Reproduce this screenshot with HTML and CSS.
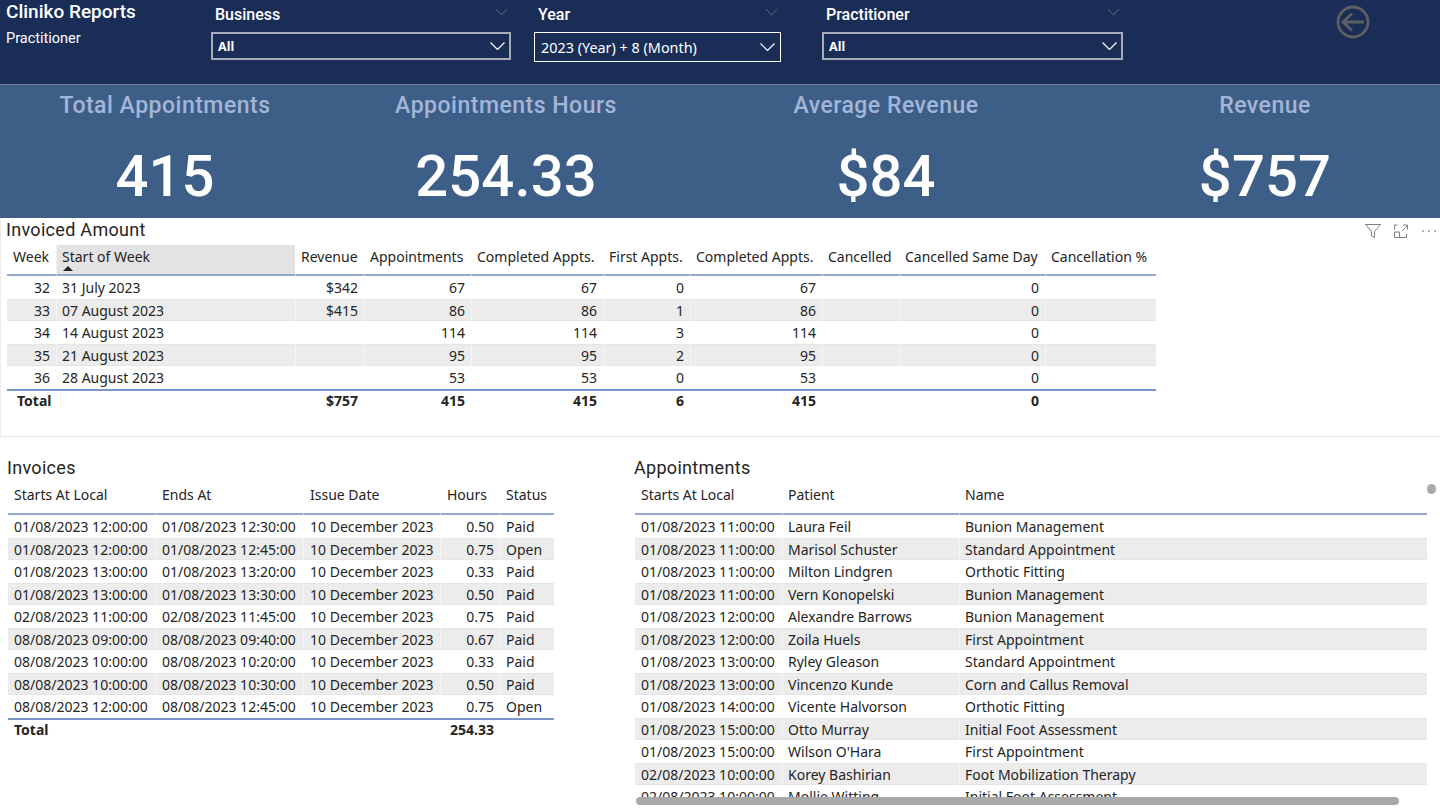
FILE: index.html
```html
<!DOCTYPE html>
<html lang="en">
<head>
    <meta charset="UTF-8">
    <title>Cliniko Reports - Practitioner</title>
    <link rel="stylesheet" href="styles.css">
</head>
<body>

    <header class="topbar">
        <div class="brand">
            <div class="brand-title">Cliniko Reports</div>
            <div class="brand-sub">Practitioner</div>
        </div>
        <div class="slicer slicer-business">
            <div class="slicer-head">
                <span>Business</span>
                <svg class="chev chev-dim" viewBox="0 0 14 8"><path d="M1 1l6 6 6-6"/></svg>
            </div>
            <div class="slicer-box">
                <b>All</b>
                <svg class="chev" viewBox="0 0 14 8"><path d="M0 0.5l7 7 7-7"/></svg>
            </div>
        </div>
        <div class="slicer slicer-year">
            <div class="slicer-head">
                <span>Year</span>
                <svg class="chev chev-dim" viewBox="0 0 14 8"><path d="M1 1l6 6 6-6"/></svg>
            </div>
            <div class="slicer-box slicer-box-tall">
                <span>2023 (Year) + 8 (Month)</span>
                <svg class="chev" viewBox="0 0 14 8"><path d="M0 0.5l7 7 7-7"/></svg>
            </div>
        </div>
        <div class="slicer slicer-prac">
            <div class="slicer-head">
                <span>Practitioner</span>
                <svg class="chev chev-dim" viewBox="0 0 14 8"><path d="M1 1l6 6 6-6"/></svg>
            </div>
            <div class="slicer-box">
                <b>All</b>
                <svg class="chev" viewBox="0 0 14 8"><path d="M0 0.5l7 7 7-7"/></svg>
            </div>
        </div>
        <svg class="back" viewBox="0 0 34 34">
            <circle cx="17" cy="17" r="15"/>
            <path d="M28 17H8M16 8.500l-9 8.500 9 8.500"/>
        </svg>
    </header>

    <section class="kpis">
        <div class="kpi"><div class="kpi-label">Total Appointments</div><div class="kpi-value">415</div></div>
        <div class="kpi"><div class="kpi-label">Appointments Hours</div><div class="kpi-value">254.33</div></div>
        <div class="kpi"><div class="kpi-label">Average Revenue</div><div class="kpi-value">$84</div></div>
        <div class="kpi"><div class="kpi-label">Revenue</div><div class="kpi-value">$757</div></div>
    </section>

    <section class="panel-weekly">
        <h3 class="visual-title">Invoiced Amount</h3>
        <div class="visual-tools">
            <svg viewBox="0 0 16 16"><path d="M0.500 1.500h15L9.500 8.500v6l-3-1.500V8.500z"/></svg>
            <svg viewBox="0 0 16 16"><path d="M1.500 6.500V2h3M1.500 9v5.500h12V11M1.500 9h5v5.500M9 8l5.500-5.500M10 2h4.500v4.500"/></svg>
            <svg viewBox="0 0 16 16"><path class="dots" d="M1 8h1.600M7.200 8h1.600M13.400 8h1.600"/></svg>
        </div>
        <table class="grid weekly">
            <colgroup>
                <col class="w-week"><col class="w-start"><col class="w-rev"><col class="w-appt"><col class="w-comp">
                <col class="w-first"><col class="w-comp"><col class="w-canc"><col class="w-same"><col class="w-pct">
            </colgroup>
            <thead>
                <tr>
                    <th>Week</th>
                    <th class="sorted">Start of Week<i class="sort-mark"></i></th>
                    <th>Revenue</th>
                    <th>Appointments</th>
                    <th>Completed Appts.</th>
                    <th>First Appts.</th>
                    <th>Completed Appts.</th>
                    <th>Cancelled</th>
                    <th>Cancelled Same Day</th>
                    <th>Cancellation %</th>
                </tr>
            </thead>
            <tbody>
                <tr><td class="num">32</td><td>31 July 2023</td><td class="num">$342</td><td class="num">67</td><td class="num">67</td><td class="num">0</td><td class="num">67</td><td></td><td class="num">0</td><td></td></tr>
                <tr><td class="num">33</td><td>07 August 2023</td><td class="num">$415</td><td class="num">86</td><td class="num">86</td><td class="num">1</td><td class="num">86</td><td></td><td class="num">0</td><td></td></tr>
                <tr><td class="num">34</td><td>14 August 2023</td><td></td><td class="num">114</td><td class="num">114</td><td class="num">3</td><td class="num">114</td><td></td><td class="num">0</td><td></td></tr>
                <tr><td class="num">35</td><td>21 August 2023</td><td></td><td class="num">95</td><td class="num">95</td><td class="num">2</td><td class="num">95</td><td></td><td class="num">0</td><td></td></tr>
                <tr><td class="num">36</td><td>28 August 2023</td><td></td><td class="num">53</td><td class="num">53</td><td class="num">0</td><td class="num">53</td><td></td><td class="num">0</td><td></td></tr>
            </tbody>
            <tfoot>
                <tr><td class="total-label">Total</td><td></td><td class="num">$757</td><td class="num">415</td><td class="num">415</td><td class="num">6</td><td class="num">415</td><td></td><td class="num">0</td><td></td></tr>
            </tfoot>
        </table>
    </section>

    <section class="lower">
        <div class="panel-invoices">
            <h3 class="visual-title">Invoices</h3>
            <table class="grid invoices">
                <colgroup>
                    <col class="w-stamp"><col class="w-stamp2"><col class="w-issue"><col class="w-hours"><col class="w-status">
                </colgroup>
                <thead>
                    <tr><th>Starts At Local</th><th>Ends At</th><th>Issue Date</th><th>Hours</th><th>Status</th></tr>
                </thead>
                <tbody>
                    <tr><td>01/08/2023 12:00:00</td><td>01/08/2023 12:30:00</td><td>10 December 2023</td><td class="num">0.50</td><td>Paid</td></tr>
                    <tr><td>01/08/2023 12:00:00</td><td>01/08/2023 12:45:00</td><td>10 December 2023</td><td class="num">0.75</td><td>Open</td></tr>
                    <tr><td>01/08/2023 13:00:00</td><td>01/08/2023 13:20:00</td><td>10 December 2023</td><td class="num">0.33</td><td>Paid</td></tr>
                    <tr><td>01/08/2023 13:00:00</td><td>01/08/2023 13:30:00</td><td>10 December 2023</td><td class="num">0.50</td><td>Paid</td></tr>
                    <tr><td>02/08/2023 11:00:00</td><td>02/08/2023 11:45:00</td><td>10 December 2023</td><td class="num">0.75</td><td>Paid</td></tr>
                    <tr><td>08/08/2023 09:00:00</td><td>08/08/2023 09:40:00</td><td>10 December 2023</td><td class="num">0.67</td><td>Paid</td></tr>
                    <tr><td>08/08/2023 10:00:00</td><td>08/08/2023 10:20:00</td><td>10 December 2023</td><td class="num">0.33</td><td>Paid</td></tr>
                    <tr><td>08/08/2023 10:00:00</td><td>08/08/2023 10:30:00</td><td>10 December 2023</td><td class="num">0.50</td><td>Paid</td></tr>
                    <tr><td>08/08/2023 12:00:00</td><td>08/08/2023 12:45:00</td><td>10 December 2023</td><td class="num">0.75</td><td>Open</td></tr>
                </tbody>
                <tfoot>
                    <tr><td>Total</td><td></td><td></td><td class="num">254.33</td><td></td></tr>
                </tfoot>
            </table>
        </div>

        <div class="panel-appts">
            <h3 class="visual-title">Appointments</h3>
            <div class="appts-clip">
                <table class="grid appts">
                    <colgroup>
                        <col class="w-stamp"><col class="w-patient"><col>
                    </colgroup>
                    <thead>
                        <tr><th>Starts At Local</th><th>Patient</th><th>Name</th></tr>
                    </thead>
                    <tbody>
                        <tr><td>01/08/2023 11:00:00</td><td>Laura Feil</td><td>Bunion Management</td></tr>
                        <tr><td>01/08/2023 11:00:00</td><td>Marisol Schuster</td><td>Standard Appointment</td></tr>
                        <tr><td>01/08/2023 11:00:00</td><td>Milton Lindgren</td><td>Orthotic Fitting</td></tr>
                        <tr><td>01/08/2023 11:00:00</td><td>Vern Konopelski</td><td>Bunion Management</td></tr>
                        <tr><td>01/08/2023 12:00:00</td><td>Alexandre Barrows</td><td>Bunion Management</td></tr>
                        <tr><td>01/08/2023 12:00:00</td><td>Zoila Huels</td><td>First Appointment</td></tr>
                        <tr><td>01/08/2023 13:00:00</td><td>Ryley Gleason</td><td>Standard Appointment</td></tr>
                        <tr><td>01/08/2023 13:00:00</td><td>Vincenzo Kunde</td><td>Corn and Callus Removal</td></tr>
                        <tr><td>01/08/2023 14:00:00</td><td>Vicente Halvorson</td><td>Orthotic Fitting</td></tr>
                        <tr><td>01/08/2023 15:00:00</td><td>Otto Murray</td><td>Initial Foot Assessment</td></tr>
                        <tr><td>01/08/2023 15:00:00</td><td>Wilson O'Hara</td><td>First Appointment</td></tr>
                        <tr><td>02/08/2023 10:00:00</td><td>Korey Bashirian</td><td>Foot Mobilization Therapy</td></tr>
                        <tr><td>02/08/2023 10:00:00</td><td>Mollie Witting</td><td>Initial Foot Assessment</td></tr>
                    </tbody>
                </table>
            </div>
            <div class="scroll-thumb-h"></div>
            <div class="scroll-thumb-v"></div>
        </div>
    </section>

</body>
</html>
```

FILE: styles.css
```css
* {
    box-sizing: border-box;
}

html, body {
    margin: 0;
    height: 809px;
    overflow: hidden;
    background: #fff;
}

body {
    font-family: "Noto Sans", "Open Sans", sans-serif;
    font-size: 14px;
    color: #252423;
}

/* top bar */
.topbar {
    display: flex;
    align-items: flex-start;
    height: 85px;
    background: #1a2d57;
    border-bottom: 1px solid #75819b;
    color: #fff;
    font-family: Roboto, sans-serif;
}

.brand {
    width: 211px;
    padding: 2px 0 0 6px;
}

.brand-title {
    font-size: 19px;
    font-weight: 500;
    line-height: 20px;
}

.brand-sub {
    margin-top: 8px;
    font-size: 14.5px;
    line-height: 18px;
}

.slicer-business { width: 300px; }
.slicer-year { width: 247px; margin-left: 23px; }
.slicer-prac { width: 301px; margin-left: 41px; }

.slicer-head {
    display: flex;
    justify-content: space-between;
    align-items: center;
    height: 32px;
    padding: 0 3px 3px 4px;
    font-size: 16px;
    font-weight: 500;
}

.slicer-head .chev-dim {
    width: 13px;
    margin-top: -5px;
}

.slicer-box {
    display: flex;
    justify-content: space-between;
    align-items: center;
    height: 28px;
    padding: 0 4px 0 5px;
    border: 2px solid #a5abb9;
    font-family: "Noto Sans", sans-serif;
    font-size: 12.5px;
}

.slicer-box-tall {
    height: 30px;
    padding-left: 6px;
    padding-right: 5px;
    border: 1px solid #fff;
    font-size: 14.4px;
}

.chev {
    width: 15px;
    height: 8px;
    fill: none;
    stroke: #fff;
    stroke-width: 1.2;
}

.chev-dim {
    stroke: #4f5a75;
}

.back {
    width: 34px;
    height: 34px;
    margin: 5px 0 0 213px;
    fill: none;
    stroke: #5e5f60;
    stroke-width: 2.8;
}

/* kpi band */
.kpis {
    display: grid;
    grid-template-columns: 330px 352px 408px 350px;
    height: 133px;
    background: #3d5f87;
    font-family: Roboto, sans-serif;
    text-align: center;
}

.kpi-label {
    padding-top: 7px;
    height: 60px;
    font-size: 23px;
    font-weight: 500;
    line-height: 28px;
    letter-spacing: 0.5px;
    color: #a3b5d8;
}

.kpi-value {
    font-size: 58px;
    font-weight: 500;
    line-height: 62px;
    letter-spacing: 0.1px;
    color: #fff;
}

/* invoiced amount */
.panel-weekly {
    position: relative;
    height: 219px;
    padding: 2px 0 0 6px;
    border-left: 1px solid #ececec;
    border-bottom: 1px solid #e6e6e6;
}

.visual-title {
    margin: 0;
    height: 25px;
    font-family: Roboto, sans-serif;
    font-size: 18px;
    font-weight: 400;
    line-height: 20px;
    letter-spacing: 0.3px;
    color: #252423;
}

.panel-weekly .visual-title {
    margin-left: -1px;
}

.visual-tools {
    position: absolute;
    top: 5px;
    right: 3px;
    display: flex;
    gap: 12px;
}

.visual-tools svg {
    width: 16px;
    height: 16px;
    fill: none;
    stroke: #7f7f7f;
    stroke-width: 1;
}

.visual-tools .dots {
    stroke-width: 1.6;
}

/* tables */
.grid {
    border-collapse: separate;
    border-spacing: 0;
    table-layout: fixed;
}

.grid th {
    padding: 0 6px;
    font-weight: 400;
    text-align: left;
    white-space: nowrap;
    border-bottom: 2px solid #94a7cf;
    vertical-align: top;
}

.grid td {
    height: 22.5px;
    padding: 0 6px;
    white-space: nowrap;
    line-height: 20px;
    vertical-align: middle;
}

.grid tbody td {
    padding-top: 2px;
}

.grid tbody td + td,
.grid th + th {
    padding-left: 5px;
    border-left: 1px solid rgba(255, 255, 255, 0.45);
}

.grid tbody tr:nth-child(even) td {
    background: #ececec;
    box-shadow: inset 0 1px 0 #e5e5e5, inset 0 -1px 0 #e5e5e5;
}

.grid tfoot td {
    border-top: 2px solid #7a93cb;
    font-weight: 700;
}

.grid .num {
    text-align: right;
}

.weekly {
    width: 1149px;
}

.weekly th {
    height: 31px;
    padding-top: 2px;
    line-height: 20px;
}

.weekly .sorted {
    position: relative;
    background: #e3e3e3;
}

.sort-mark {
    position: absolute;
    left: 6px;
    bottom: 3px;
    border-left: 5px solid transparent;
    border-right: 5px solid transparent;
    border-bottom: 5px solid #252423;
}

.grid .total-label {
    padding-left: 10px;
}

.w-week { width: 49px; }
.w-start { width: 239px; }
.w-rev { width: 69px; }
.w-appt { width: 107px; }
.w-comp { width: 132px; }
.w-first { width: 87px; }
.w-canc { width: 77px; }
.w-same { width: 146px; }
.w-pct { width: 111px; }

/* lower half */
.lower {
    display: flex;
    height: 372px;
    padding-top: 21px;
}

.panel-invoices {
    width: 635px;
    padding-left: 8px;
}

.panel-invoices .visual-title,
.panel-appts .visual-title {
    margin-left: -1px;
    height: 26px;
}

.panel-appts {
    position: relative;
    flex: 1;
}

.invoices th,
.appts th {
    height: 31px;
    padding-top: 1px;
    line-height: 20px;
}

.invoices {
    width: 546px;
}

.invoices tfoot td {
    padding-bottom: 2px;
}

.invoices th + th,
.invoices tbody td + td {
    padding-left: 6px;
}

.invoices th:last-child,
.invoices tbody td:last-child {
    padding-left: 5px;
}

.w-stamp { width: 147px; }
.w-stamp2 { width: 148px; }
.w-issue { width: 137px; }
.w-hours { width: 60px; }
.w-status { width: 54px; }
.w-patient { width: 177px; }

.appts-clip {
    width: 792px;
    height: 313px;
    overflow: hidden;
}

.appts {
    width: 792px;
}

.scroll-thumb-h {
    position: absolute;
    left: 1px;
    top: 339px;
    width: 763px;
    height: 8px;
    border-radius: 4px;
    background: #a9a9a9;
}

.scroll-thumb-v {
    position: absolute;
    left: 792px;
    top: 26px;
    width: 9px;
    height: 10px;
    border-radius: 5px;
    background: #a9a9a9;
}
```
